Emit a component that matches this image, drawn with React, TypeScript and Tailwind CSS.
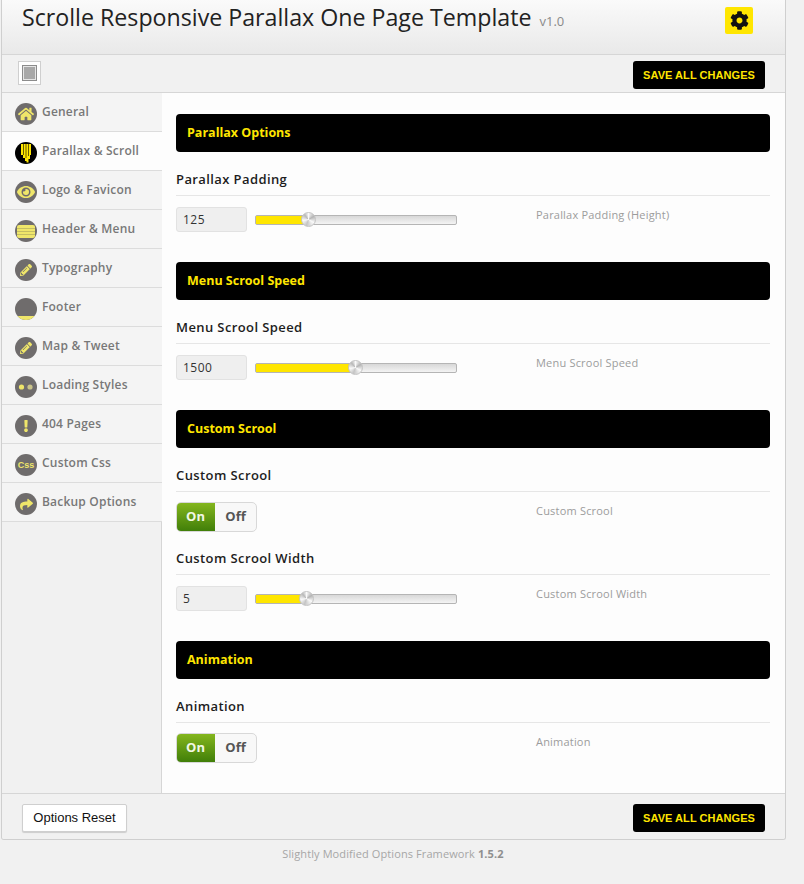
import { FaCog, FaEye, FaExclamation, FaHome, FaPencilAlt, FaShare } from "react-icons/fa";
import type { ReactNode } from "react";

const openSans = "font-['Open_Sans','Noto_Sans',sans-serif]";
const arial = "font-['Liberation_Sans',Arial,sans-serif]";
const ICON = "#efe66a";

function Bars() {
  return (
    <svg width="14" height="19" viewBox="0 0 14 19">
      <path d="M2 0h10v11h-1v4H9.5v3.5H7.5V17H6v-3H4v-3H2z" fill="#ffe600" />
      <path d="M4.5 0v11M7 0v14M9.5 0v12" stroke="#000" strokeWidth="0.6" />
    </svg>
  );
}
function Lines() {
  return (
    <svg width="18" height="13" viewBox="0 0 18 13">
      <rect width="18" height="13" rx="2" fill={ICON} />
      <path d="M0 3.5h18M0 6.5h18M0 9.5h18" stroke="#a8a25c" strokeWidth="0.6" />
    </svg>
  );
}
function Dots() {
  return (
    <svg width="16" height="6" viewBox="0 0 16 6">
      <circle cx="3.5" cy="3" r="2.6" fill={ICON} />
      <circle cx="12" cy="3" r="2.6" fill="#c9c38a" />
    </svg>
  );
}

const navItems: { label: string; icon: ReactNode; active?: boolean; footer?: boolean }[] = [
  { label: "General", icon: <FaHome size={16} color={ICON} /> },
  { label: "Parallax & Scroll", icon: <Bars />, active: true },
  { label: "Logo & Favicon", icon: <FaEye size={18} color={ICON} /> },
  { label: "Header & Menu", icon: <Lines /> },
  { label: "Typography", icon: <FaPencilAlt size={12} color={ICON} /> },
  { label: "Footer", icon: null, footer: true },
  { label: "Map & Tweet", icon: <FaPencilAlt size={12} color={ICON} /> },
  { label: "Loading Styles", icon: <Dots /> },
  { label: "404 Pages", icon: <FaExclamation size={12} color={ICON} /> },
  { label: "Custom Css", icon: <span className={`${arial} text-[9px] font-bold leading-none text-[#efe66a]`}>Css</span> },
  { label: "Backup Options", icon: <FaShare size={13} color={ICON} /> },
];

function NavRow({ label, icon, active, footer }: (typeof navItems)[number]) {
  return (
    <div className={`flex h-[39px] items-start gap-[5px] border-b border-[#dcdcdc] pl-[13px] ${active ? "bg-[#fdfdfd]" : "bg-[#f4f4f4]"}`}>
      <span className={`relative mt-[10px] flex h-[22px] w-[22px] shrink-0 items-center justify-center overflow-hidden rounded-full ${active ? "bg-black" : "bg-[#6f6c6c]"}`}>
        {icon}
        {footer && <span className="absolute inset-x-0 bottom-0 h-[4px] bg-[#efe66a]" />}
      </span>
      <span className={`${openSans} mt-[10px] text-[12px] font-semibold leading-[18px] tracking-[0.2px] text-[#787878]`}>{label}</span>
    </div>
  );
}

function SaveButton() {
  return (
    <button className={`${arial} flex h-[28px] w-[132px] items-center justify-center rounded-[3px] bg-black text-[11px] font-bold uppercase tracking-[0.05px] text-[#ffe600]`}>
      Save all changes
    </button>
  );
}

function SectionHeader({ title }: { title: string }) {
  return (
    <div className={`${openSans} flex h-[38px] items-center rounded-[4px] bg-black pl-[11px] text-[12.5px] font-bold text-[#ffe600]`}>
      {title}
    </div>
  );
}

function OptionLabel({ label }: { label: string }) {
  return (
    <div className={`${openSans} h-[44px] border-b border-[#e6e6e6] pt-[17px] text-[13px] font-semibold leading-[20px] tracking-[0.4px] text-[#1d1d1d]`}>
      {label}
    </div>
  );
}

function Description({ text }: { text: string }) {
  return <div className={`${openSans} text-[11px] leading-[16px] tracking-[0.2px] text-[#9c9c9c]`}>{text}</div>;
}

function SliderOption({ label, value, fill, description }: { label: string; value: string; fill: number; description: string }) {
  return (
    <div>
      <OptionLabel label={label} />
      <div className="mt-[11px] flex h-[25px]">
        <div className={`${openSans} flex h-[25px] w-[71px] items-center rounded-[3px] border border-[#e2e2e2] bg-[#efefef] pl-[6px] text-[12px] tracking-[0.5px] text-[#333]`}>
          {value}
        </div>
        <div className="relative ml-[8px] mt-[8px] h-[10px] w-[202px] rounded-[2px] border border-[#b5b5b5] bg-gradient-to-b from-[#d8d8d8] to-[#f4f4f4]">
          <div className="absolute inset-y-0 left-0 bg-[#ffe600]" style={{ width: fill }} />
          <div
            className="absolute top-[-4px] h-[15px] w-[15px] rounded-full border border-[#c4c4c4] bg-[conic-gradient(#fafafa_0deg,#b4b4b4_60deg,#fafafa_120deg,#c4c4c4_200deg,#fafafa_260deg,#b8b8b8_320deg,#fafafa_360deg)]"
            style={{ left: fill - 3 }}
          />
        </div>
        <div className="ml-[79px]">
          <Description text={description} />
        </div>
      </div>
    </div>
  );
}

function ToggleOption({ label, description }: { label: string; description: string }) {
  return (
    <div>
      <OptionLabel label={label} />
      <div className="mt-[10px] flex h-[29px]">
        <div className={`${openSans} flex h-[30px] w-[81px] shrink-0 overflow-hidden rounded-[5px] border border-[#d8d8d8] bg-[#f8f8f8] text-[13px] font-bold`}>
          <span className="-my-px -ml-px flex w-[39px] items-center justify-center rounded-l-[5px] bg-gradient-to-b from-[#86b81e] to-[#3e7d08] text-[#f2f7e4]">On</span>
          <span className="flex flex-1 items-center justify-center text-[#555]">Off</span>
        </div>
        <div className="ml-[279px] pt-px">
          <Description text={description} />
        </div>
      </div>
    </div>
  );
}

export default function App() {
  return (
    <div className="min-h-[884px] w-full bg-[#f1f1f1]">
      <div className="ml-px w-[785px] overflow-hidden rounded-b-[3px] border-x border-b border-[#cfcfcf] bg-[#f1f1f1]">
        <header className="flex h-[54px] justify-between bg-gradient-to-b from-[#fafafa] to-[#e9e9e9]">
          <div className={`${openSans} ml-[20px] flex items-baseline text-[#333]`}>
            <h1 className="mt-[-1px] text-[23.2px] font-normal leading-[37px] text-[#222]">Scrolle Responsive Parallax One Page Template</h1>
            <span className="ml-[8px] text-[13px] text-[#8a8a8a]">v1.0</span>
          </div>
          <div className="mr-[32px] mt-[7px] flex h-[27px] w-[28px] items-center justify-center rounded-[2px] bg-[#ffe600]">
            <FaCog size={19} color="#111" />
          </div>
        </header>

        <div className="flex h-[39px] items-start justify-between border-y border-[#d6d6d6] bg-[#f1f1f1] pr-[20px] pt-[6px]">
          <div className="ml-[16px] flex h-[24px] w-[23px] items-center justify-center border border-[#cfcfcf] bg-white">
            <span className="h-[16px] w-[15px] border border-[#8c8c8c] bg-[#a8a8a8] shadow-[inset_0_0_0_1px_#e5e5e5]" />
          </div>
          <SaveButton />
        </div>

        <div className="flex h-[700px]">
          <nav className="flex w-[160px] shrink-0 flex-col">
            {navItems.map((item) => (
              <NavRow key={item.label} {...item} />
            ))}
            <div className="flex-1 border-r border-[#d6d6d6] bg-[#f1f1f1]" />
          </nav>
          <main className="flex-1 bg-[#fdfdfd] pl-[14px] pr-[15px] pt-[21px]">
            <SectionHeader title="Parallax Options" />
            <SliderOption label="Parallax Padding" value="125" fill={48} description="Parallax Padding (Height)" />
            <div className="h-[30px]" />
            <SectionHeader title="Menu Scrool Speed" />
            <SliderOption label="Menu Scrool Speed" value="1500" fill={95} description="Menu Scrool Speed" />
            <div className="h-[30px]" />
            <SectionHeader title="Custom Scrool" />
            <ToggleOption label="Custom Scrool" description="Custom Scrool" />
            <SliderOption label="Custom Scrool Width" value="5" fill={46} description="Custom Scrool Width" />
            <div className="h-[30px]" />
            <SectionHeader title="Animation" />
            <ToggleOption label="Animation" description="Animation" />
          </main>
        </div>

        <footer className="flex h-[46px] items-start justify-between border-t border-[#d6d6d6] bg-[#f1f1f1] pl-[20px] pr-[20px] pt-[10px]">
          <button className={`${arial} h-[28px] w-[105px] rounded-[2px] border border-[#cfcfcf] bg-white text-[13px] text-[#111] shadow-[0_1px_1px_rgba(0,0,0,0.15)]`}>
            Options Reset
          </button>
          <SaveButton />
        </footer>
      </div>
      <p className={`${openSans} mt-[6px] w-[786px] text-center text-[11px] leading-[16px] tracking-[0.1px] text-[#a6a6a6]`}>
        Slightly Modified Options Framework <span className="font-bold text-[#8f8f8f]">1.5.2</span>
      </p>
    </div>
  );
}
